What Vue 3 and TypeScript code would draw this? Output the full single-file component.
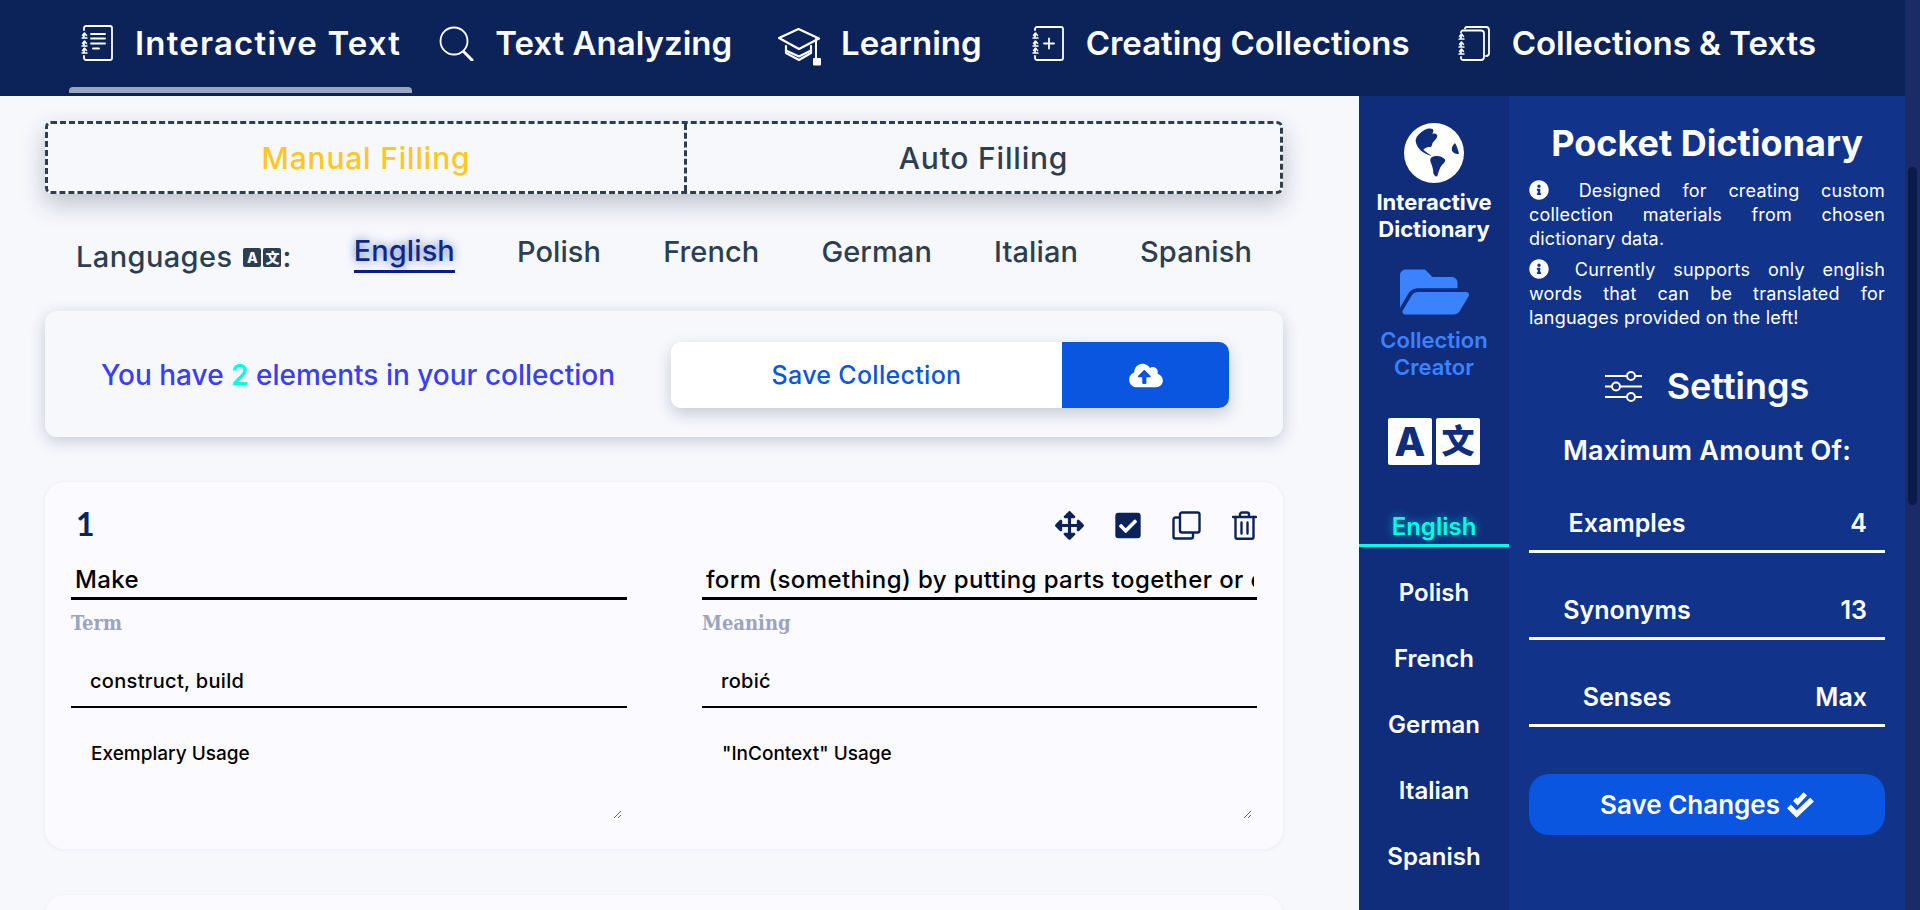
<template>
  <div class="page">
    <div class="shell">
      <header class="topbar">
        <nav class="nav">
          <a v-for="item in navItems" :key="item.label" class="nav-item" :class="[item.icon, { active: item.active }]">
            <svg class="nav-icon" :viewBox="iconBoxes[item.icon]" fill="none" stroke="#fff" stroke-width="1.800" stroke-linecap="round" stroke-linejoin="round">
              <template v-if="item.icon === 'notes'">
                <path d="M3 5V3a2 2 0 0 1 2-2h24a2 2 0 0 1 2 2v30a2 2 0 0 1-2 2H5a2 2 0 0 1-2-2v-2" />
                <path d="M3 9v3M3 17v3M3 25v2" />
                <path d="M1 13h5M1 21h5M1 28h5M1.500 10.500L3.500 8l2 2.500M1.500 18.500L3.500 16l2 2.500M1.500 25.500L3.500 23l2 2.500" stroke-width="1.500" />
                <path d="M10 9h14M10 13.500h14M10 18.500h14M12 23.500h6" />
              </template>
              <template v-else-if="item.icon === 'search'">
                <circle cx="15" cy="15" r="13.5" />
                <path d="M25 26l8 8" stroke-width="3" />
              </template>
              <template v-else-if="item.icon === 'cap'">
                <path d="M1 10L20.500 1 41 10.500 21 21z" stroke-width="2.200" />
                <path d="M8 18v7l13 7 12-7v-7" stroke-width="2.200" />
                <path d="M9 23l12 5.500L32 23" stroke-width="2" />
                <path d="M38 11v19" stroke-width="2" />
                <rect x="35" y="30" width="8" height="7.500" rx="1" fill="#fff" stroke="none" />
              </template>
              <template v-else-if="item.icon === 'plus'">
                <path d="M3 4V3a2 2 0 0 1 2-2h24a2 2 0 0 1 2 2v29a2 2 0 0 1-2 2H5a2 2 0 0 1-2-2v-2" />
                <path d="M3 8v3M3 16v3M3 24v2" />
                <path d="M1 12h5M1 20h5M1 27h5M1.500 9.500L3.500 7l2 2.500M1.500 17.500L3.500 15l2 2.500M1.500 24.500L3.500 22l2 2.500" stroke-width="1.500" />
                <path d="M12 17.500h10M17 12.500v10" />
              </template>
              <template v-else>
                <path d="M7 2.500A1.800 1.800 0 0 1 8.800 1H28a3 3 0 0 1 3 3v23a3 3 0 0 1-3 3" />
                <path d="M3 6V6.500A2 2 0 0 1 5 4.500H23a3 3 0 0 1 3 3V31a3 3 0 0 1-3 3H5a2 2 0 0 1-2-2v-1" />
                <path d="M3 9v3M3 17v3M3 25v2" />
                <path d="M1 13h5M1 21h5M1 28h5M1.500 10.500L3.500 8l2 2.500M1.500 18.500L3.500 16l2 2.500M1.500 25.500L3.500 23l2 2.500" stroke-width="1.500" />
              </template>
            </svg>
            <span class="nav-label">{{ item.label }}</span>
          </a>
        </nav>
      </header>

      <div class="content">
        <main class="main">
          <div class="fill-tabs">
            <button class="fill-tab selected">Manual Filling</button>
            <button class="fill-tab">Auto Filling</button>
          </div>

          <div class="lang-row">
            <div class="lang-title">
              Languages
              <span class="mini-translate"><span>A</span><span>文</span></span>:
            </div>
            <button v-for="(lang, i) in languages" :key="lang" class="lang-btn" :class="{ current: i === 0 }">
              {{ lang }}
            </button>
          </div>

          <section class="counter-card">
            <p class="counter-text">You have <b>2</b> elements in your collection</p>
            <div class="save-group">
              <button class="save-label">Save Collection</button>
              <button class="save-icon">
                <svg viewBox="0 0 640 512" width="34" height="27" fill="#fff">
                  <path d="M537.6 226.6c4.1-10.7 6.4-22.4 6.4-34.6 0-53-43-96-96-96-19.7 0-38.1 6-53.3 16.2C367 64.2 315.3 32 256 32c-88.4 0-160 71.6-160 160 0 2.7.1 5.4.2 8.1C40.2 219.8 0 273.2 0 336c0 79.5 64.5 144 144 144h368c70.7 0 128-57.3 128-128 0-61.9-44-113.6-102.4-125.4zM393.4 288H328v112c0 8.8-7.2 16-16 16h-48c-8.8 0-16-7.2-16-16V288h-65.4c-14.3 0-21.4-17.2-11.3-27.3l105.4-105.4c6.2-6.2 16.4-6.2 22.6 0l105.4 105.4c10.1 10.1 2.9 27.3-11.3 27.3z" />
                </svg>
              </button>
            </div>
          </section>

          <section class="word-card">
            <div class="word-head">
              <span class="word-no">1</span>
              <div class="word-tools">
                <svg viewBox="0 0 512 512" width="29" height="29" fill="#0c2359">
                  <path d="M352.201 425.775l-79.196 79.196c-9.373 9.373-24.568 9.373-33.941 0l-79.196-79.196c-15.119-15.119-4.411-40.971 16.971-40.97h51.162L228 284H127.196v51.162c0 21.382-25.851 32.09-40.971 16.971L7.029 272.937c-9.373-9.373-9.373-24.569 0-33.941L86.225 159.8c15.119-15.119 40.971-4.411 40.971 16.971V228H228V127.196h-51.23c-21.382 0-32.09-25.851-16.971-40.971l79.196-79.196c9.373-9.373 24.568-9.373 33.941 0l79.196 79.196c15.119 15.119 4.411 40.971-16.971 40.971h-51.162V228h100.804v-51.162c0-21.382 25.851-32.09 40.97-16.971l79.196 79.196c9.373 9.373 9.373 24.569 0 33.941L425.773 352.2c-15.119 15.119-40.971 4.411-40.97-16.971V284H284v100.804h51.23c21.382 0 32.09 25.851 16.971 40.971z" />
                </svg>
                <svg viewBox="0 0 448 512" width="26" height="29" fill="#0c2359">
                  <path d="M400 480H48c-26.51 0-48-21.49-48-48V80c0-26.51 21.49-48 48-48h352c26.51 0 48 21.49 48 48v352c0 26.51-21.49 48-48 48zm-204.686-98.059l184-184c6.248-6.248 6.248-16.379 0-22.627l-22.627-22.627c-6.248-6.248-16.379-6.249-22.628 0L184 302.745l-70.059-70.059c-6.248-6.248-16.379-6.248-22.628 0l-22.627 22.627c-6.248 6.248-6.248 16.379 0 22.627l104 104c6.249 6.25 16.379 6.25 22.628.001z" />
                </svg>
                <svg viewBox="0 0 29 29" width="29" height="29" fill="none" stroke="#0c2359" stroke-width="2.400" stroke-linejoin="round">
                  <rect x="8" y="1.500" width="19.500" height="20" rx="2" />
                  <path d="M8 6.500H3.500a2 2 0 0 0-2 2V25.500a2 2 0 0 0 2 2H19a2 2 0 0 0 2-2v-4" />
                </svg>
                <svg viewBox="0 0 25 29" width="25" height="29" fill="none" stroke="#0c2359" stroke-width="2.400" stroke-linecap="round" stroke-linejoin="round">
                  <path d="M1 6h23M8 6V3.500A2 2 0 0 1 10 1.500h5a2 2 0 0 1 2 2V6" />
                  <path d="M3.500 6v20a1.800 1.800 0 0 0 1.800 1.800h14.400a1.800 1.800 0 0 0 1.800-1.800V6" />
                  <path d="M9.500 11.500v11M15.500 11.500v11" />
                </svg>
              </div>
            </div>

            <div class="word-grid">
              <div class="word-col">
                <input class="field-main" value="Make" />
                <label class="field-caption">Term</label>
                <input class="field-sub" value="construct, build" />
                <textarea class="field-area">Exemplary Usage</textarea>
              </div>
              <div class="word-col">
                <input class="field-main" value="form (something) by putting parts together or combining substances" />
                <label class="field-caption">Meaning</label>
                <input class="field-sub" value="robić" />
                <textarea class="field-area">"InContext" Usage</textarea>
              </div>
            </div>
          </section>

          <section class="word-card next"></section>
        </main>

        <aside class="side">
          <div class="side-menu">
            <svg class="globe" viewBox="0 0 180 180" fill="#fff" fill-rule="evenodd">
              <path d="M90 0a90 90 0 1 0 0 180a90 90 0 1 0 0-180z M35 50C38 38 48 30 60 22C68 16 80 15 86 18C90 22 88 28 84 33C90 30 97 32 100 36C101 44 94 50 87 58C83 64 85 70 80 73C73 71 65 73 58 80C65 86 72 92 84 98C74 98 62 92 52 84C44 76 34 62 35 50z M83 103C92 98 105 98 113 102C124 108 128 112 118 122C108 130 104 145 100 160C94 161 90 158 88 150C88 138 84 128 80 118C78 112 78 106 83 103z M153 60C158 68 163 82 165 92C158 94 152 92 146 86C140 78 145 68 153 60z" />
            </svg>
            <div class="menu-title">Interactive<br />Dictionary</div>
            <svg class="folder" viewBox="0 0 576 512" fill="#3b82ff" preserveAspectRatio="none">
              <path d="M572.694 292.093L500.270 416.248A63.997 63.997 0 0 1 444.989 448H45.025c-18.523 0-30.064-20.093-20.731-36.093l72.424-124.155A64 64 0 0 1 152 256h399.964c18.523 0 30.064 20.093 20.730 36.093zM152 224h328v-48c0-26.510-21.490-48-48-48H272l-64-64H48C21.490 64 0 85.490 0 112v278.046l69.077-118.418C86.214 242.250 117.989 224 152 224z" />
            </svg>
            <div class="menu-title blue">Collection<br />Creator</div>
            <div class="big-translate"><span>A</span><span>文</span></div>
            <ul class="side-langs">
              <li v-for="(lang, i) in languages" :key="lang" :class="{ on: i === 0 }">{{ lang }}</li>
            </ul>
          </div>

          <div class="side-panel">
            <h1 class="panel-title">Pocket Dictionary</h1>
            <p class="panel-note">
              <svg class="info" viewBox="0 0 512 512" fill="#fff"><path d="M256 8C119.043 8 8 119.083 8 256c0 136.997 111.043 248 248 248s248-111.003 248-248C504 119.083 392.957 8 256 8zm0 110c23.196 0 42 18.804 42 42s-18.804 42-42 42-42-18.804-42-42 18.804-42 42-42zm56 254c0 6.627-5.373 12-12 12h-88c-6.627 0-12-5.373-12-12v-24c0-6.627 5.373-12 12-12h12v-64h-12c-6.627 0-12-5.373-12-12v-24c0-6.627 5.373-12 12-12h64c6.627 0 12 5.373 12 12v100h12c6.627 0 12 5.373 12 12v24z" /></svg>
              Designed for creating custom collection materials from chosen dictionary data.
            </p>
            <p class="panel-note second">
              <svg class="info" viewBox="0 0 512 512" fill="#fff"><path d="M256 8C119.043 8 8 119.083 8 256c0 136.997 111.043 248 248 248s248-111.003 248-248C504 119.083 392.957 8 256 8zm0 110c23.196 0 42 18.804 42 42s-18.804 42-42 42-42-18.804-42-42 18.804-42 42-42zm56 254c0 6.627-5.373 12-12 12h-88c-6.627 0-12-5.373-12-12v-24c0-6.627 5.373-12 12-12h12v-64h-12c-6.627 0-12-5.373-12-12v-24c0-6.627 5.373-12 12-12h64c6.627 0 12 5.373 12 12v100h12c6.627 0 12 5.373 12 12v24z" /></svg>
              Currently supports only english words that can be translated for languages provided on the left!
            </p>

            <div class="settings-head">
              <svg viewBox="0 0 37 33" width="37" height="33" fill="none" stroke="#fff" stroke-width="2">
                <path d="M0 6h22M30 6h7M0 16.500h7M15 16.500h22M0 27h22M30 27h7" />
                <circle cx="26" cy="6" r="4" />
                <circle cx="11" cy="16.500" r="4" />
                <circle cx="26" cy="27" r="4" />
              </svg>
              <h2>Settings</h2>
            </div>
            <h3 class="amount-title">Maximum Amount Of:</h3>

            <div v-for="row in settings" :key="row.name" class="setting-row">
              <span class="setting-name">{{ row.name }}</span>
              <span class="setting-value">{{ row.value }}</span>
            </div>

            <button class="save-changes">
              Save Changes
              <svg viewBox="0 0 28 28" width="27" height="27" fill="none" stroke="#fff" stroke-width="5.500" stroke-linejoin="miter">
                <path d="M2 16l8 8L26 9" />
                <path d="M8 8.500l3 3L19 3" stroke-width="5" />
              </svg>
            </button>
          </div>
        </aside>
      </div>
    </div>

    <div class="scroll-track"><div class="scroll-thumb"></div></div>
  </div>
</template>

<script setup lang="ts">
type NavIcon = "notes" | "search" | "cap" | "plus" | "stack";

interface NavItem {
  label: string;
  icon: NavIcon;
  active?: boolean;
}

const navItems: NavItem[] = [
  { label: "Interactive Text", icon: "notes", active: true },
  { label: "Text Analyzing", icon: "search" },
  { label: "Learning", icon: "cap" },
  { label: "Creating Collections", icon: "plus" },
  { label: "Collections & Texts", icon: "stack" },
];

const iconBoxes: Record<NavIcon, string> = {
  notes: "0 0 33 36",
  search: "0 0 35 35",
  cap: "0 0 44 39",
  plus: "0 0 33 35",
  stack: "0 0 33 35",
};

const languages = ["English", "Polish", "French", "German", "Italian", "Spanish"];

const settings = [
  { name: "Examples", value: "4" },
  { name: "Synonyms", value: "13" },
  { name: "Senses", value: "Max" },
];
</script>

<style>
html,
body {
  margin: 0;
  overflow: hidden;
}
</style>

<style scoped>
* {
  box-sizing: border-box;
}

.page {
  display: flex;
  height: 910px;
  overflow: hidden;
  font-family: Inter, "Noto Sans", sans-serif;
  background: #f6f8fc;
}

.shell {
  flex: 1;
  min-width: 0;
  display: flex;
  flex-direction: column;
}

.topbar {
  height: 96px;
  flex: none;
  background: #0c2359;
}

.nav {
  display: flex;
  align-items: center;
  gap: 48px;
  height: 86px;
  padding-left: 81px;
}

.nav-item {
  position: relative;
  display: flex;
  align-items: center;
  gap: 21px;
  color: #fff;
}

.nav-item.active {
  margin-right: -10px;
  letter-spacing: 1.2px;
}

.nav-item.active::after {
  content: "";
  position: absolute;
  left: -12px;
  right: -11px;
  bottom: -30px;
  height: 6px;
  border-radius: 4px 4px 0 0;
  background: #9aa5c0;
}

.nav-label {
  font-size: 33px;
  line-height: 40px;
  font-weight: 600;
  white-space: nowrap;
}

.nav-icon {
  flex: none;
  width: 33px;
  height: 36px;
}

.search .nav-icon {
  width: 35px;
  height: 35px;
}

.nav-item.cap {
  gap: 19px;
  margin-left: -2px;
  margin-right: 2px;
}

.cap .nav-icon {
  width: 44px;
  height: 39px;
  margin-top: 8px;
}

.plus .nav-icon,
.stack .nav-icon {
  height: 35px;
}

.content {
  flex: 1;
  min-height: 0;
  display: flex;
}

.main {
  flex: 1;
  min-width: 0;
  overflow: hidden;
  padding: 25px 76px 0 45px;
}

.fill-tabs {
  display: flex;
  height: 73px;
  border: 3px dashed #2c3e50;
  border-radius: 6px;
  box-shadow: 0 10px 24px rgba(30, 40, 70, 0.26);
}

.fill-tab {
  border: 0;
  background: none;
  padding: 0;
  font: 500 30px Inter, sans-serif;
  letter-spacing: 0.8px;
  color: #2c3e50;
  width: 594px;
}

.fill-tab.selected {
  width: 640px;
  color: #ffc71f;
  border-right: 3px dashed #2c3e50;
}

.lang-row {
  display: flex;
  align-items: flex-start;
  gap: 62px;
  margin-top: 37px;
  padding-left: 31px;
  color: #2c3e50;
}

.lang-title {
  display: flex;
  align-items: center;
  margin-top: 6px;
  font-size: 29px;
  line-height: 40px;
  font-weight: 500;
  letter-spacing: 0.4px;
  white-space: nowrap;
}

.mini-translate {
  display: inline-flex;
  gap: 2px;
  margin: 0 1px 0 11px;
}

.mini-translate span {
  display: block;
  width: 18px;
  height: 19px;
  border-radius: 2px;
  background: #2c3e50;
  color: #f6f8fc;
  font: 800 14px/19px Inter, "Noto Sans CJK SC", sans-serif;
  letter-spacing: 0;
  text-align: center;
}

.lang-btn {
  height: 42px;
  padding: 0;
  border: 0;
  background: none;
  font: 500 29px/36px Inter, sans-serif;
  letter-spacing: 0.1px;
  color: #2c3e50;
}

.lang-btn.current {
  color: #0a2a85;
  border-bottom: 3px solid #00218a;
  text-shadow: 0 0 10px rgba(10, 42, 160, 0.6);
}

.counter-card {
  display: flex;
  align-items: center;
  justify-content: space-between;
  height: 126px;
  margin-top: 34px;
  padding: 2px 54px 0 56px;
  border-radius: 12px;
  background: #f6f8fc;
  box-shadow: 0 4px 16px rgba(30, 40, 70, 0.22);
}

.counter-text {
  margin: 0;
  font-size: 28px;
  font-weight: 500;
  color: #3a3ff0;
}

.counter-text b {
  font-weight: 600;
  color: #00ffe5;
}

.save-group {
  display: flex;
  height: 66px;
  border-radius: 10px;
  box-shadow: 0 6px 16px rgba(30, 40, 70, 0.22);
}

.save-label {
  width: 391px;
  border: 0;
  border-radius: 10px 0 0 10px;
  background: #fff;
  font: 500 25px Inter, sans-serif;
  letter-spacing: 0.3px;
  color: #0a56e0;
}

.save-icon {
  display: flex;
  align-items: center;
  justify-content: center;
  width: 167px;
  border: 0;
  border-radius: 0 10px 10px 0;
  background: #0a56e0;
}

.word-card {
  margin-top: 45px;
  padding: 29px 26px 30px;
  border-radius: 20px;
  background: #fbfbff;
  box-shadow: 0 1px 5px rgba(30, 40, 70, 0.06);
}

.word-card.next {
  height: 120px;
  margin-top: 46px;
}

.word-head {
  display: flex;
  align-items: center;
  justify-content: space-between;
  height: 29px;
}

.word-no {
  padding: 0 0 4px 5px;
  font: 700 32px Lato, sans-serif;
  color: #0c2359;
}

.word-tools {
  display: flex;
  gap: 31px;
}

.word-grid {
  display: grid;
  grid-template-columns: 556px 555px;
  gap: 75px;
  margin-top: 22px;
}

.word-col {
  display: flex;
  flex-direction: column;
  min-width: 0;
}

.word-col input,
.word-col textarea {
  display: block;
  width: 100%;
  border: 0;
  outline: 0;
  background: transparent;
  color: #000;
  font-family: Inter, sans-serif;
}

.field-main {
  height: 38px;
  padding: 0 3px 0 4px;
  border-bottom: 3px solid #000 !important;
  font-size: 24px;
  font-weight: 500;
  letter-spacing: 0.4px;
}

.field-caption {
  height: 22px;
  margin-top: 12px;
  font: 700 20px/22px "DejaVu Serif Condensed", "DejaVu Serif", serif;
  font-stretch: condensed;
  color: #9aa5bd;
}

.field-sub {
  height: 47px;
  margin-top: 27px;
  padding: 0 0 5px 19px;
  border-bottom: 2px solid #000 !important;
  font-size: 20px;
  font-weight: 500;
  letter-spacing: 0.3px;
}

.word-col .field-area {
  width: calc(100% - 5px);
  height: 94px;
  margin-top: 17px;
  padding: 18px 20px;
  font-size: 19px;
  line-height: 22px;
  font-weight: 500;
}

.side {
  flex: none;
  display: flex;
  width: 546px;
  color: #fff;
}

.side-menu {
  flex: none;
  width: 150px;
  display: flex;
  flex-direction: column;
  align-items: center;
  padding-top: 27px;
  background: #102d7c;
}

.globe {
  width: 60px;
  height: 60px;
  margin-bottom: 6px;
}

.menu-title {
  font-size: 22px;
  line-height: 27px;
  font-weight: 700;
  text-align: center;
}

.menu-title.blue {
  font-weight: 600;
  color: #3b82ff;
}

.folder {
  width: 69px;
  height: 60px;
  margin: 19px 0 5px;
}

.big-translate {
  display: flex;
  gap: 4px;
  margin-top: 37px;
}

.big-translate span {
  width: 44px;
  height: 47px;
  border-radius: 2px;
  background: #fff;
  color: #102d7c;
  font: 800 40px/47px Inter, "Noto Sans CJK SC", sans-serif;
  text-align: center;
}

.big-translate span + span {
  font-size: 33px;
}

.side-langs {
  list-style: none;
  width: 100%;
  margin: 29px 0 0;
  padding: 0;
}

.side-langs li {
  position: relative;
  height: 66px;
  font-size: 24px;
  line-height: 66px;
  font-weight: 600;
  text-align: center;
}

.side-langs li.on {
  color: #00ffe5;
  text-shadow: 0 0 8px rgba(0, 255, 229, 0.55);
}

.side-langs li.on::after {
  content: "";
  position: absolute;
  left: 0;
  right: 0;
  bottom: 13px;
  height: 3px;
  background: #00ffe5;
}

.side-panel {
  flex: 1;
  padding: 24px 20px 0 20px;
  background: #12338a;
}

.panel-title {
  margin: 0 0 13px;
  font-size: 36px;
  line-height: 46px;
  font-weight: 700;
  text-align: center;
}

.panel-note {
  margin: 0;
  font-size: 18px;
  line-height: 24px;
  font-weight: 400;
  letter-spacing: 0.2px;
  text-align: justify;
}

.panel-note.second {
  margin-top: 7px;
}

.info {
  width: 20px;
  height: 20px;
  margin-right: 8px;
  vertical-align: -3px;
}

.settings-head {
  display: flex;
  align-items: center;
  justify-content: center;
  gap: 25px;
  height: 44px;
  margin-top: 34px;
}

.settings-head h2 {
  margin: 0;
  font-size: 36px;
  font-weight: 600;
}

.amount-title {
  margin: 28px 0 1px;
  font-size: 27px;
  line-height: 30px;
  font-weight: 600;
  letter-spacing: 0.2px;
  text-align: center;
}

.setting-row {
  display: flex;
  align-items: center;
  height: 60px;
  margin-top: 27px;
  padding-top: 3px;
  border-bottom: 3px solid #fff;
  font-size: 25px;
  font-weight: 600;
}

.setting-name {
  width: 196px;
  text-align: center;
}

.setting-value {
  flex: 1;
  padding-right: 18px;
  text-align: right;
}

.save-changes {
  display: flex;
  align-items: center;
  justify-content: center;
  gap: 7px;
  width: 100%;
  height: 61px;
  margin-top: 47px;
  border: 0;
  border-radius: 20px;
  background: #0a56e0;
  color: #fff;
  font: 600 26px Inter, sans-serif;
}

.scroll-track {
  flex: none;
  width: 15px;
  padding: 167px 3px 0;
  background: #1a2b66;
}

.scroll-thumb {
  height: 338px;
  border-radius: 6px;
  background: #0a1a4b;
}
</style>
